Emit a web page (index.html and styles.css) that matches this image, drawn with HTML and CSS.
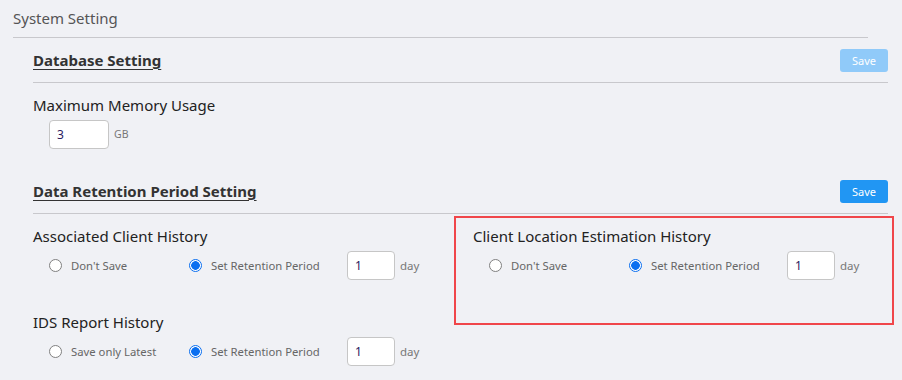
FILE: index.html
```html
<!DOCTYPE html>
<html lang="en">
  <head>
    <meta charset="UTF-8">
    <title>System Setting</title>
    <link rel="stylesheet" href="styles.css">
  </head>
  <body>
    <div class="page">
      <div class="page-title">System Setting</div>

      <div class="section">
        <div class="section-head">
          <h3>Database Setting</h3>
          <button class="btn-save" disabled>Save</button>
        </div>
        <div class="item memory">
          <div class="item-label">Maximum Memory Usage</div>
          <div class="item-row memory-row">
            <input type="text" class="num-input" value="3">
            <span class="unit">GB</span>
          </div>
        </div>
      </div>

      <div class="section">
        <div class="section-head">
          <h3>Data Retention Period Setting</h3>
          <button class="btn-save">Save</button>
        </div>
        <div class="grid">
          <div class="item">
            <div class="item-label">Associated Client History</div>
            <div class="item-row">
              <label class="opt opt-first"><input type="radio" name="assoc"> Don't Save</label>
              <label class="opt opt-second"><input type="radio" name="assoc" checked> Set Retention Period</label>
              <input type="text" class="num-input" value="1">
              <span class="unit">day</span>
            </div>
          </div>
          <div class="item highlighted">
            <div class="item-label">Client Location Estimation History</div>
            <div class="item-row">
              <label class="opt opt-first"><input type="radio" name="loc"> Don't Save</label>
              <label class="opt opt-second"><input type="radio" name="loc" checked> Set Retention Period</label>
              <input type="text" class="num-input" value="1">
              <span class="unit">day</span>
            </div>
          </div>
          <div class="item">
            <div class="item-label">IDS Report History</div>
            <div class="item-row">
              <label class="opt opt-first"><input type="radio" name="ids"> Save only Latest</label>
              <label class="opt opt-second"><input type="radio" name="ids" checked> Set Retention Period</label>
              <input type="text" class="num-input" value="1">
              <span class="unit">day</span>
            </div>
          </div>
        </div>
      </div>
    </div>
  </body>
</html>
```
FILE: styles.css
```css
body {
  margin: 0;
  background-color: #f0f1f5;
  font-family: "Noto Sans", "Open Sans", sans-serif;
  color: #222;
}

.page {
  padding: 0 14px 0 13px;
}

.page-title {
  height: 37px;
  line-height: 36px;
  font-size: 15px;
  color: #555;
  border-bottom: 1px solid #c8c8cc;
  margin-right: 20px;
}

.section {
  margin-left: 20px;
}

.section-head {
  display: flex;
  justify-content: space-between;
  align-items: center;
  height: 44px;
  border-bottom: 1px solid #c8c8cc;
}

.section + .section .section-head {
  margin-top: 6px;
}

.section-head h3 {
  margin: 0;
  font-size: 15px;
  font-weight: bold;
  color: #333;
  text-decoration: underline;
  text-decoration-thickness: 1px;
  text-underline-offset: 3px;
}

.btn-save {
  width: 48px;
  height: 23px;
  border: none;
  border-radius: 3px;
  background-color: #2196f3;
  color: #fff;
  font-family: inherit;
  font-size: 11px;
  padding: 0;
  cursor: pointer;
}

.btn-save:disabled {
  background-color: #90caf9;
  cursor: default;
}

.grid {
  display: grid;
  grid-template-columns: 440px 1fr;
}

.item {
  padding: 11px 0 20px;
}

.item.memory {
  padding: 11px 0 14px;
}

.item-label {
  font-size: 15px;
  line-height: 22px;
  color: #222;
}

.item-row {
  display: flex;
  align-items: center;
  padding-left: 16px;
  margin-top: 4px;
  height: 29px;
}

.memory-row {
  height: 30px;
  margin-top: 3px;
}

.highlighted {
  margin: 2px -6px -25px -19px;
  padding: 7px 0 0 17px;
  border: 2px solid #f0464a;
  height: 109px;
  box-sizing: border-box;
}

.opt {
  display: flex;
  align-items: center;
  font-size: 11.3px;
  color: #666;
}

.opt-first {
  width: 140px;
}

.opt-second {
  width: 158px;
}

.opt input {
  appearance: none;
  width: 13px;
  height: 13px;
  margin: 0 9px 0 0;
  border: 1px solid #808080;
  border-radius: 50%;
  background: #fff;
  box-sizing: border-box;
}

.opt input:checked {
  border: 1px solid #0b6ff0;
  background: radial-gradient(circle, #0b6ff0 0 4px, #fff 4.6px);
}

.num-input {
  width: 48px;
  height: 29px;
  box-sizing: border-box;
  border: 1px solid #c6c6c6;
  border-radius: 4px;
  background: #fff;
  padding: 0 7px;
  font-family: inherit;
  font-size: 12px;
  color: #2a1a60;
}

.memory-row .num-input {
  width: 60px;
}

.unit {
  margin-left: 5px;
  font-size: 11.5px;
  color: #777;
}

.memory-row .unit {
  font-size: 10.5px;
}
```
